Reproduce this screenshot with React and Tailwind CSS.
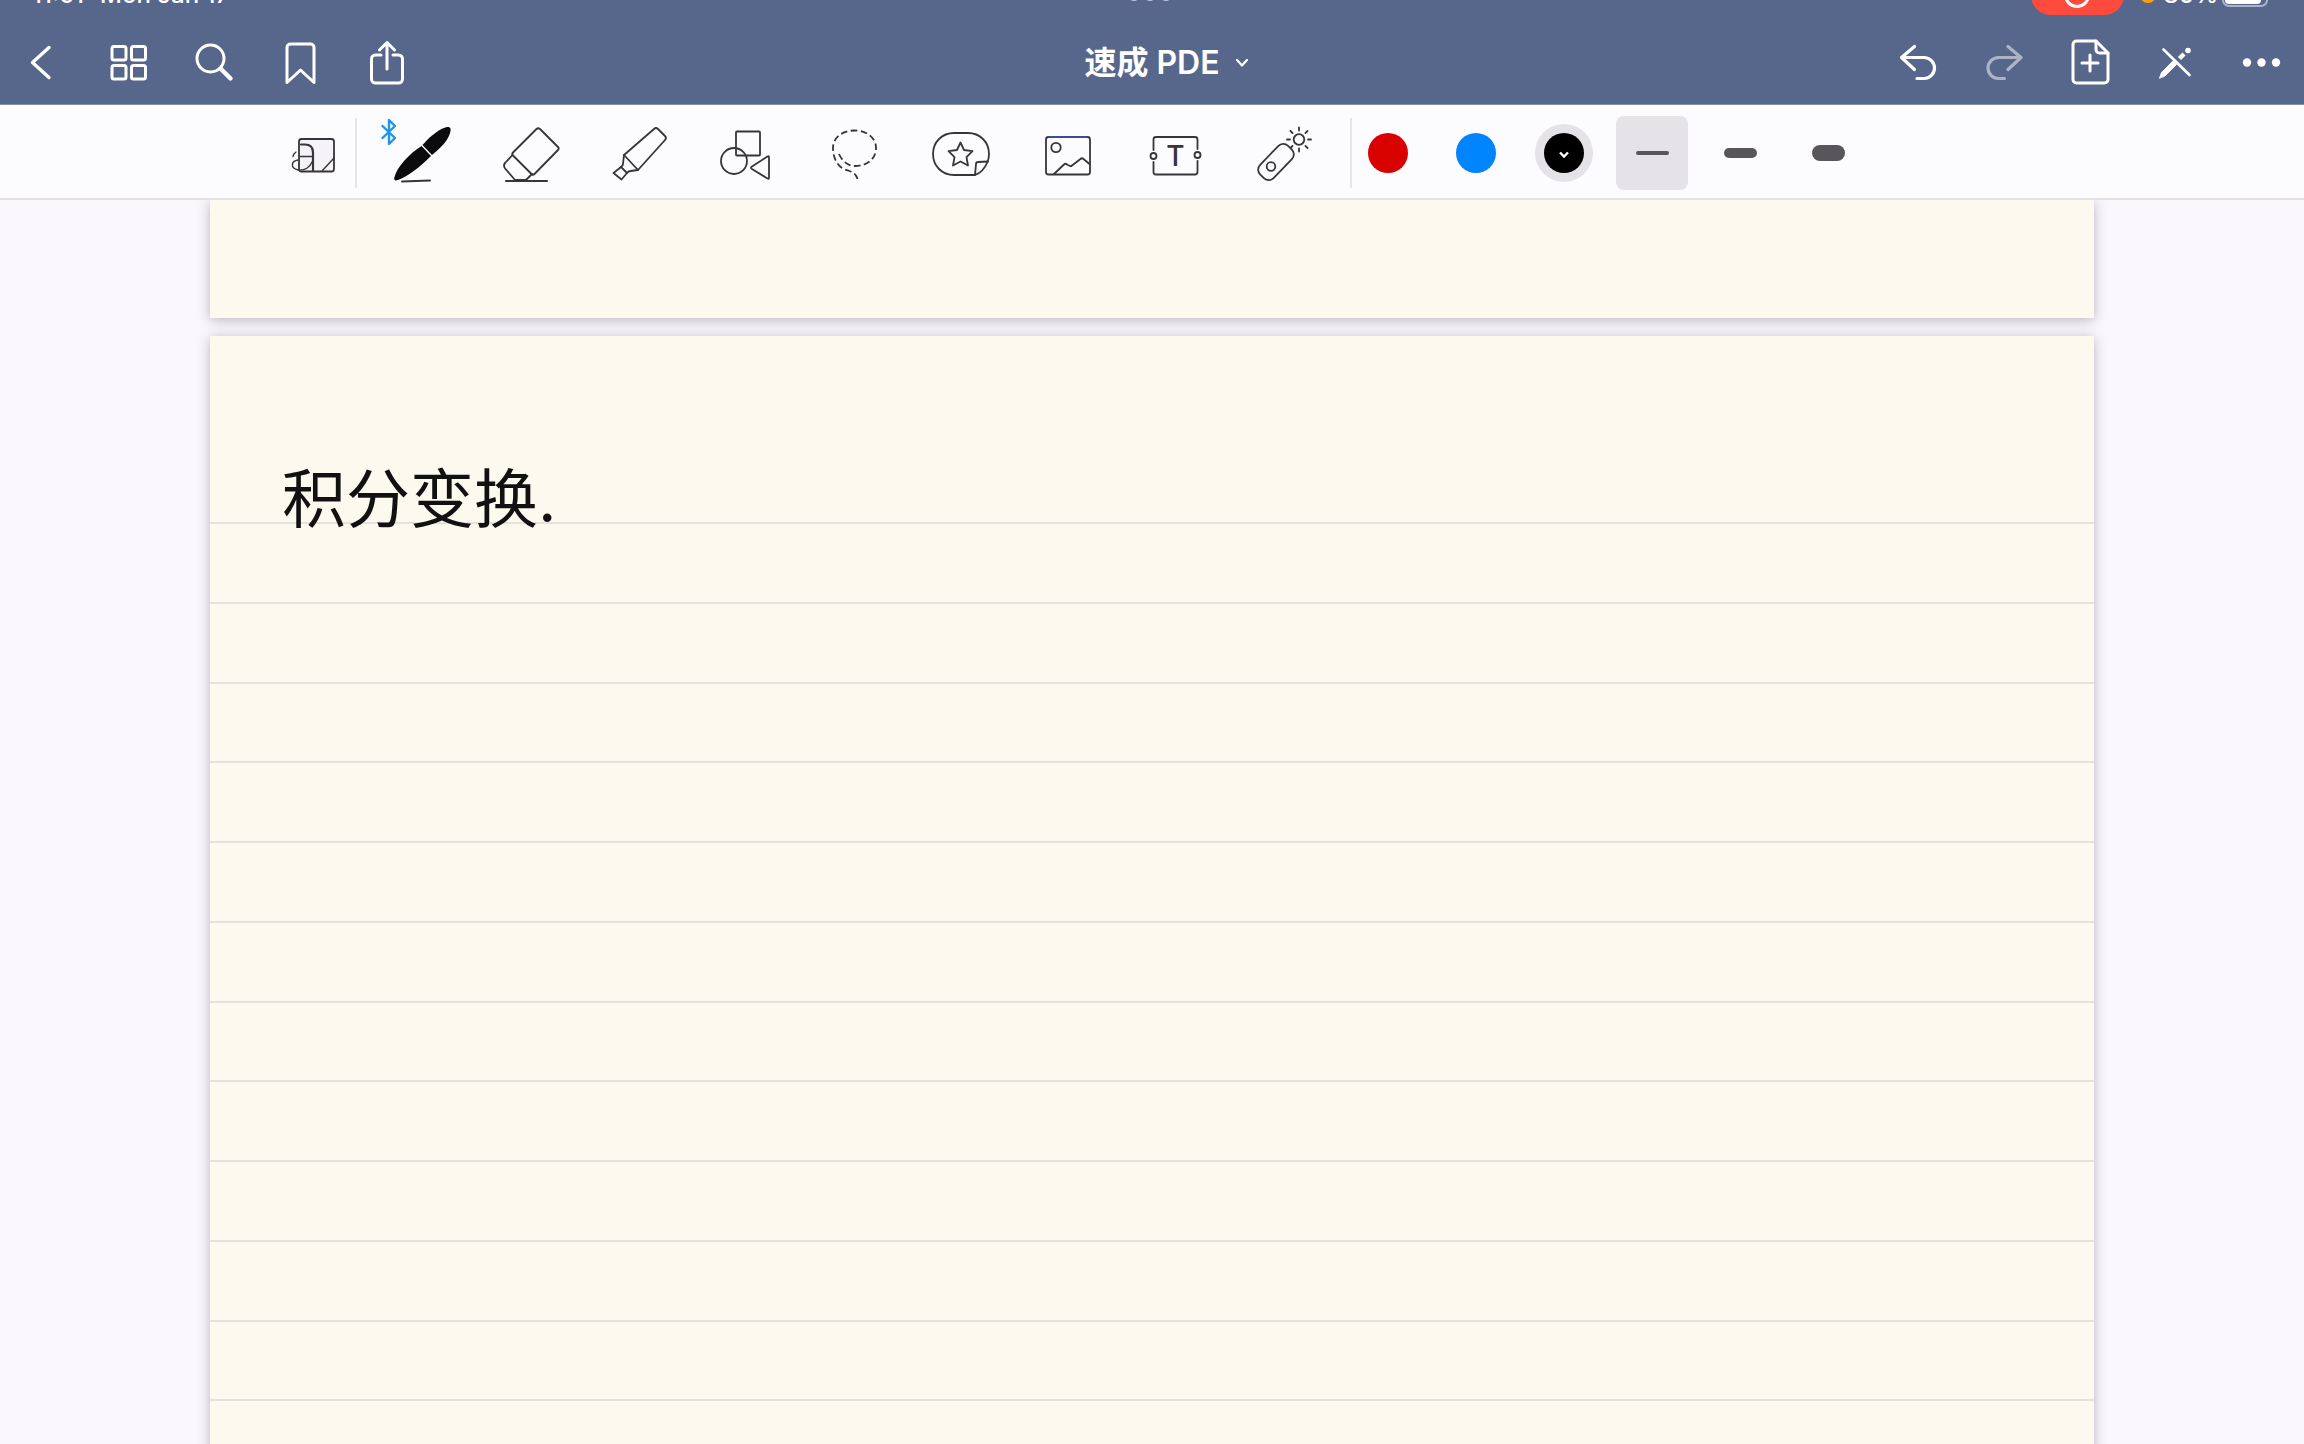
import { useState } from "react";
import clsx from "clsx";

/* ── Nav bar icons (48×48) ── */
const NavIcon = ({ children }) => (
  <svg
    viewBox="0 0 48 48"
    className="w-12 h-12"
    fill="none"
    stroke="currentColor"
    strokeWidth="3"
    strokeLinecap="round"
    strokeLinejoin="round"
    aria-hidden="true"
  >
    {children}
  </svg>
);

const navLeft = [
  { label: "Back", icon: <path d="M30 9.5 13.5 24.5l16.500 15" strokeWidth="3.4" /> },
  {
    label: "Thumbnails",
    icon: (
      <>
        <rect x="7" y="8.5" width="14" height="13.5" rx="2" />
        <rect x="26.5" y="8.5" width="14" height="13.5" rx="2" />
        <rect x="7" y="27.5" width="14" height="13.5" rx="2" />
        <rect x="26.5" y="27.5" width="14" height="13.5" rx="2" />
      </>
    ),
  },
  {
    label: "Search",
    icon: (
      <>
        <circle cx="19.5" cy="20.5" r="13.5" />
        <path d="M30 31l9.5 9.5" strokeWidth="4.4" />
      </>
    ),
  },
  {
    label: "Bookmark",
    icon: <path d="M10 44.500V9.500a3.500 3.500 0 0 1 3.500-3.500h20a3.500 3.500 0 0 1 3.500 3.500v35L23.500 32z" />,
  },
  {
    label: "Share",
    icon: (
      <>
        <path d="M18 17h-5.500a4 4 0 0 0-4 4v20a4 4 0 0 0 4 4h23a4 4 0 0 0 4-4V21a4 4 0 0 0-4-4H30" />
        <path d="M24 31V5M16.500 12 24 4.500l7.500 7.500" />
      </>
    ),
  },
];

const navRight = [
  {
    label: "Undo",
    icon: (
      <path d="M21.500 8.500 8.500 19.500l13 12M9 19.500h22a10.500 10.500 0 0 1 0 21h-7" strokeWidth="3.200" />
    ),
  },
  {
    label: "Redo",
    disabled: true,
    icon: (
      <path d="M29 8.500l13 11-13 12M41.500 19.500h-22a10.500 10.500 0 0 0 0 21h6" strokeWidth="3.200" />
    ),
  },
  {
    label: "Add page",
    icon: (
      <>
        <path d="M31 3H11.500A3.500 3.500 0 0 0 8 6.500v35a3.500 3.500 0 0 0 3.500 3.500h28a3.500 3.500 0 0 0 3.500-3.500V15z" />
        <path d="M31 3v8.500a3.500 3.500 0 0 0 3.500 3.500H43" />
        <path d="M25 17v16M17 25h16" />
      </>
    ),
  },
  {
    label: "Read-only mode",
    icon: (
      <>
        <path d="M12.500 11.500 38.500 37" strokeWidth="2.600" />
        <path d="M8.500 40l2-5.500 11.500-11.500 3.500 3.500-11.500 11.500z" fill="currentColor" strokeWidth="0.800" />
        <path d="M28.500 20.500l4.500-4.500" strokeWidth="4.500" strokeLinecap="butt" />
        <circle cx="37" cy="12.500" r="2.800" fill="currentColor" stroke="none" />
      </>
    ),
  },
  {
    label: "More",
    icon: (
      <g fill="currentColor" stroke="none">
        <circle cx="10" cy="24.500" r="4.200" />
        <circle cx="24.500" cy="24.500" r="4.200" />
        <circle cx="39" cy="24.500" r="4.200" />
      </g>
    ),
  },
];

const NavButton = ({ label, icon, disabled }) => (
  <button
    type="button"
    aria-label={label}
    disabled={disabled}
    className="flex w-[86px] h-full items-center justify-center disabled:opacity-50"
  >
    <NavIcon>{icon}</NavIcon>
  </button>
);

/* ── Drawing tools (96×72) ── */
const tools = [
  {
    label: "Pen",
    icon: (
      <>
        <path d="M6.500 9 19 21l-6 6V3l6 6L6.500 21" stroke="#1c95ec" strokeWidth="2.400" />
        <g fill="#0b0b0d" stroke="none">
          <path d="M18.500 60C21 50 33 37 45.500 29l9.500 10C44 50 31 60 22 63c-3 1-4.500 0-3.500-3z" />
          <path d="M46.500 28C55 18 65 11 71 10c3-.5 4 1 3.500 4C73 22 67 29 56 38z" />
        </g>
        <path d="M26 64.500l28-1" strokeWidth="2" />
      </>
    ),
  },
  {
    label: "Eraser",
    icon: (
      <>
        <path d="M53.500 12 30 35.500q-1.500 1.500 0 3L48.500 57q1.500 1.500 3 0L75 33q1.500-1.500 0-3L57 12q-2-1.500-3.500 0z" />
        <path d="M29 38.500l-6.500 7q-3 3 0 6.500L32 63h11l6-6" />
        <path d="M23 64h41" strokeWidth="2" />
      </>
    ),
  },
  {
    label: "Highlighter",
    icon: (
      <>
        <path d="M34 38 64 12q2-2 4 0l7 7q2 2 0 4L48 53z" />
        <path d="M34 38l-1 9q0 1.500-2 3l6 6q1.500-2 3.500-2l7.500-1" />
        <path d="M31 50l-7.500 6 8 6.500 5.500-6.500" />
      </>
    ),
  },
  {
    label: "Shapes",
    icon: (
      <>
        <rect x="39" y="14.500" width="24" height="24" rx="1" />
        <circle cx="37" cy="44" r="13" />
        <path d="M55 49.500 70.500 39.500q1.500-1 1.500 1v20q0 2-1.500 1L55 52q-2-1.300 0-2.500z" />
      </>
    ),
  },
  {
    label: "Lasso",
    icon: (
      <path
        d="M35 37c3 7 9 12 16 12 12 0 21-7 21-18S62 13.500 50.500 13.500 29 20 29 31c0 8 3 16 9 20 4 3 13 2 15.500 11"
        strokeDasharray="6.500 3.500"
        strokeLinecap="butt"
      />
    ),
  },
  {
    label: "Elements",
    icon: (
      <>
        <path d="M64 58H43C31 58 22 49 22 37s9-21 21-21h14c12 0 21 9 21 21 0 3-.5 5.500-1.500 8C74 51 70 56 64 58z" />
        <path d="M64 58l1-11q0-2 2-2l10-.5" />
        <path d="M49.500 25.500l3.500 7.500 8.500 1.200-6 6 1.500 8.300-7.500-4-7.500 4 1.500-8.300-6-6 8.500-1.200z" />
      </>
    ),
  },
  {
    label: "Image",
    icon: (
      <>
        <rect x="28" y="20" width="44" height="37.500" rx="2.500" />
        <path d="M31 20h38" stroke="#3f4a94" />
        <circle cx="38" cy="30.500" r="4.700" />
        <path d="M36 57l10-9.500q1.500-1.500 3 0l3 1.500q1 .5 2-.5l8.500-6.500q1.500-1.500 3 0l6 5" />
      </>
    ),
  },
  {
    label: "Text",
    icon: (
      <>
        <path d="M28.500 33V22.500q0-2.500 2.500-2.500h39q2.500 0 2.500 2.500V32M28.500 45v10q0 2.500 2.500 2.500h39q2.500 0 2.500-2.500V44" />
        <circle cx="28.500" cy="39" r="3" />
        <circle cx="72.500" cy="38" r="3" />
        <text
          x="50.500"
          y="49"
          textAnchor="middle"
          fill="currentColor"
          stroke="none"
          fontSize="28"
          fontWeight="500"
          fontFamily="Inter, sans-serif"
        >
          T
        </text>
      </>
    ),
  },
  {
    label: "Laser pointer",
    icon: (
      <>
        <rect x="24" y="35.500" width="40" height="19" rx="7" transform="rotate(-46 44 45)" />
        <circle cx="39" cy="49.500" r="4.300" />
        <circle cx="67" cy="22.500" r="5.300" />
        <path d="M67 13.500v-3M67 31.500v3M58 22.500h-3M76 22.500h3M60.600 16.100l-2.100-2.100M73.400 16.100l2.100-2.100M60.600 28.900l-2.100 2.100M73.400 28.900l2.100 2.100" />
      </>
    ),
  },
];

const colors = [
  { label: "Red", dot: "bg-[#d90000]" },
  { label: "Blue", dot: "bg-[#0085ff]" },
  { label: "Black", dot: "bg-black" },
];

const strokes = [
  { label: "Thin", bar: "h-1" },
  { label: "Medium", bar: "h-[10px]" },
  { label: "Thick", bar: "h-4" },
];

const Divider = () => <div className="w-[2px] h-[70px] bg-[#e6e4e9]" />;

/* ── Status bar, mostly scrolled off the top edge ── */
const StatusBar = () => (
  <div className="h-5 overflow-hidden">
    <div className="-mt-[25px] grid h-10 grid-cols-[1fr_auto_1fr] items-center pl-8 pr-9 text-2xl font-medium">
      <div className="flex gap-4">
        <span>11:51</span>
        <span>Mon Jan 17</span>
      </div>
      <div className="flex gap-1">
        <span className="size-3 rounded-full bg-[#c3cadb]" />
        <span className="size-3 rounded-full bg-[#c3cadb]" />
        <span className="size-3 rounded-full bg-[#c3cadb]" />
      </div>
      <div className="flex h-10 items-center justify-end">
        <span className="mr-4 flex h-10 w-[93px] items-center justify-center rounded-full bg-[#ff4b3e]">
          <span className="flex size-[26px] items-center justify-center rounded-full border-[3px] border-white">
            <span className="size-2 rounded-full bg-white" />
          </span>
        </span>
        <span className="mr-2 size-4 rounded-full bg-[#ff9f0a]" />
        <span className="mr-1">80%</span>
        <span className="h-6 w-[46px] rounded-[7px] border-2 border-white/50 p-px">
          <span className="block h-full w-9 rounded-[4px] bg-white" />
        </span>
      </div>
    </div>
  </div>
);

const Header = () => (
  <header className="shrink-0 border-b border-[#8a8fa9] bg-[#57678b] text-white">
    <StatusBar />
    <nav className="grid h-[84px] grid-cols-[1fr_auto_1fr] items-center">
      <div className="flex h-full">
        {navLeft.map((item) => (
          <NavButton key={item.label} {...item} />
        ))}
      </div>
      <button type="button" className="flex items-center gap-4 pt-0.5 pl-7 text-[32px] leading-10 font-semibold">
        速成 PDE
        <svg viewBox="0 0 12 8" className="h-2 w-3" fill="none" stroke="currentColor" strokeWidth="2.200" aria-hidden="true">
          <path d="M1 1l5 5.500L11 1" strokeLinecap="round" strokeLinejoin="round" />
        </svg>
      </button>
      <div className="flex h-full justify-end">
        {navRight.map((item) => (
          <NavButton key={item.label} {...item} />
        ))}
      </div>
    </nav>
  </header>
);

const Toolbar = () => {
  const [tool, setTool] = useState("Pen");
  const [color, setColor] = useState("Black");
  const [stroke, setStroke] = useState("Thin");

  return (
    <div className="flex h-[95px] shrink-0 items-center border-b-2 border-[#e2e1e4] bg-[#fcfbfd] pt-0.5 pl-[273px] text-[#35353b]">
      <button type="button" aria-label="Writing position" className="flex w-[82px] justify-center">
        <svg viewBox="0 0 72 72" className="size-[72px]" fill="none" stroke="currentColor" strokeWidth="1.800" strokeLinecap="round" aria-hidden="true">
          <rect x="21" y="22" width="35" height="32.500" rx="2.500" fill="#f5f3f7" />
          <path d="M23 27.500h4q8 0 8 8V54" strokeWidth="2.200" />
          <path d="M22 39.500h13M44 54l12-13" strokeWidth="1.400" />
          <path d="M18 35q-2.500 1.500-3 4.500M20 43c-7 1-8 8 0 10 7 1 12-3 14-8" strokeWidth="1.400" />
        </svg>
      </button>
      <Divider />

      <div className="ml-[13px] flex">
        {tools.map(({ label, icon }) => (
          <button
            key={label}
            type="button"
            aria-label={label}
            aria-pressed={tool === label}
            onClick={() => setTool(label)}
            className="flex w-[107px] justify-center"
          >
            <svg
              viewBox="0 0 96 72"
              className="h-[72px] w-24"
              fill="none"
              stroke="currentColor"
              strokeWidth="1.800"
              strokeLinecap="round"
              strokeLinejoin="round"
              aria-hidden="true"
            >
              {icon}
            </svg>
          </button>
        ))}
      </div>

      <div className="ml-[17px] flex items-center">
        <Divider />
        <div className="flex gap-4">
          {colors.map(({ label, dot }) => (
            <button
              key={label}
              type="button"
              aria-label={label}
              aria-pressed={color === label}
              onClick={() => setColor(label)}
              className="flex h-[74px] w-[72px] items-center justify-center"
            >
              <span
                className={clsx(
                  "flex size-[58px] items-center justify-center rounded-full",
                  color === label && "bg-[#e5e3e8]"
                )}
              >
                <span className={clsx("flex size-10 items-center justify-center rounded-full text-white", dot)}>
                  {color === label && (
                    <svg viewBox="0 0 12 8" className="mt-1 h-2 w-3" fill="none" stroke="currentColor" strokeWidth="2.400" aria-hidden="true">
                      <path d="M2 1.500l4 4 4-4" />
                    </svg>
                  )}
                </span>
              </span>
            </button>
          ))}
          {strokes.map(({ label, bar }) => (
            <button
              key={label}
              type="button"
              aria-label={label}
              aria-pressed={stroke === label}
              onClick={() => setStroke(label)}
              className={clsx(
                "flex h-[74px] w-[72px] items-center justify-center rounded-lg",
                stroke === label && "bg-[#e5e3e8]"
              )}
            >
              <span className={clsx("w-[33px] rounded-full bg-[#58565a]", bar)} />
            </button>
          ))}
        </div>
      </div>
    </div>
  );
};

/* ── Ruled paper ── */
const Sheet = ({ children }) => (
  <section className="bg-[#fcfaee] shadow-[0_2px_12px_rgba(60,55,80,0.35)]">{children}</section>
);

const App = () => (
  <div className="flex h-screen flex-col overflow-hidden bg-[#faf8fc] font-['Inter','Noto_Sans_CJK_SC',sans-serif]">
    <Header />
    <Toolbar />
    <main className="flex min-h-0 flex-1 flex-col gap-[18px] overflow-hidden px-[210px]">
      <Sheet>
        <div className="h-[118px]" />
      </Sheet>
      <Sheet>
        <div className="h-[188px] border-b-2 border-[#e4e2dc] px-[72px] pt-[131px]">
          <p className="text-[64px] leading-[64px] whitespace-nowrap text-[#111]">积分变换.</p>
        </div>
        <div className="grid h-[957px] grid-rows-12">
          {Array.from({ length: 12 }, (_, i) => (
            <div key={i} className="border-b-2 border-[#e4e2dc]" />
          ))}
        </div>
      </Sheet>
    </main>
  </div>
);

export default App;
